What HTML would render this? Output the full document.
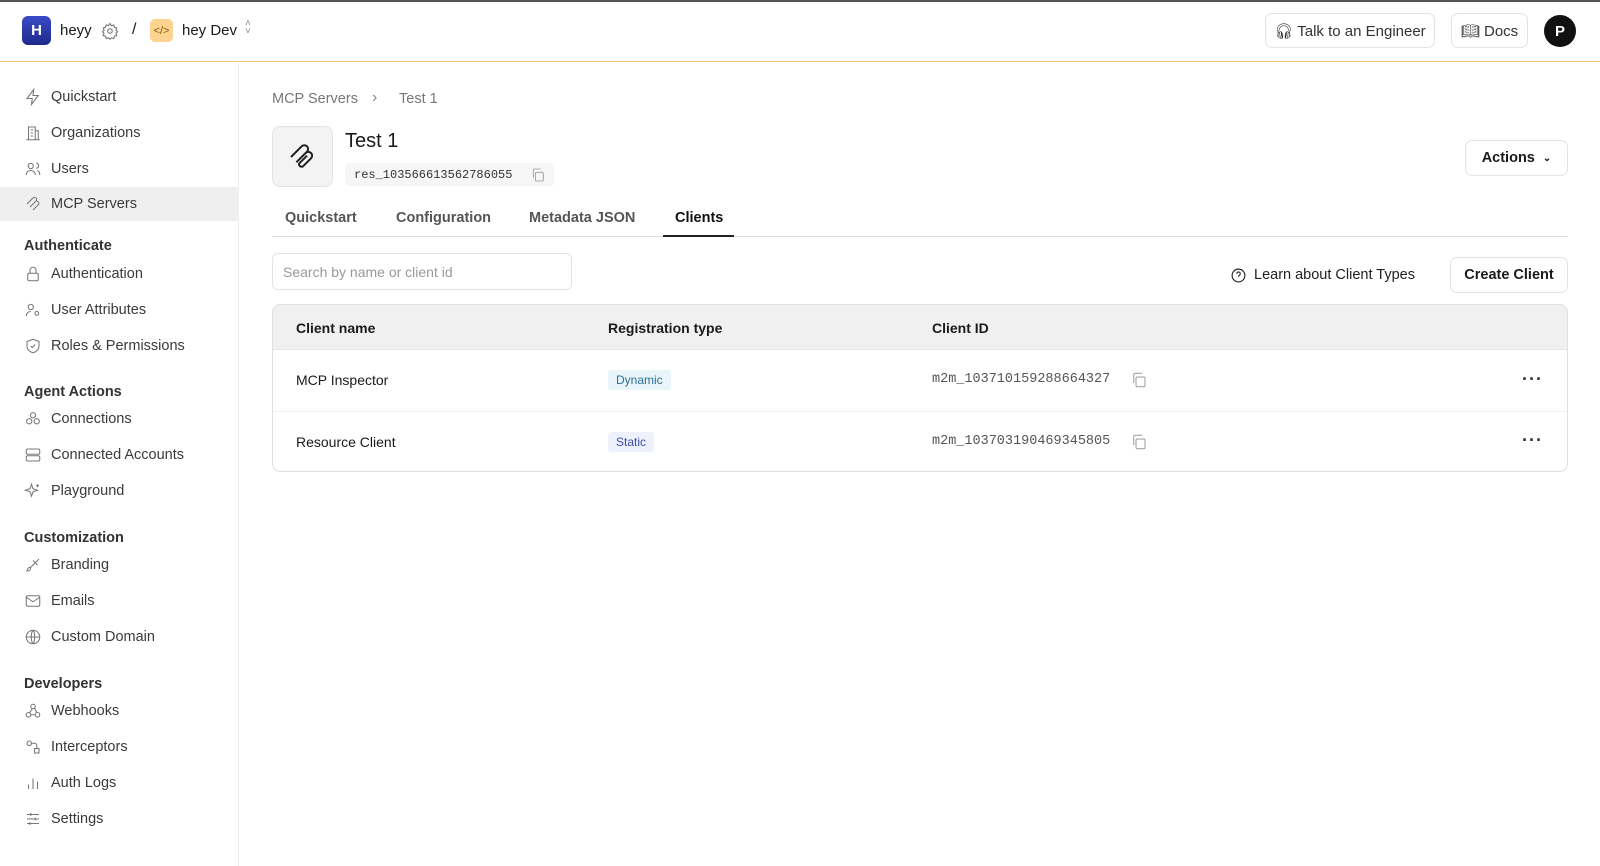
<!DOCTYPE html>
<html><head><meta charset="utf-8"><style>
*{box-sizing:border-box;margin:0;padding:0}
body{width:1600px;height:866px;overflow:hidden;background:#fff;font-family:"Liberation Sans",sans-serif;color:#1a1a1a;position:relative;font-size:14.5px}
.a{position:absolute}
.top{left:0;top:0;width:1600px;height:2px;background:#555}
.hdr{left:0;top:2px;width:1600px;height:60px;border-bottom:1px solid #f0c36d}
.side{left:0;top:63px;width:239px;height:803px;border-right:1px solid #ececec}
.it{position:absolute;left:0;width:239px;height:34px;display:flex;align-items:center;padding-left:24px;color:#3a3a3a}
.it svg{width:18px;height:18px;margin-right:9px;stroke:#777;fill:none;stroke-width:1.4}
.sec{position:absolute;left:24px;font-weight:bold;color:#333;font-size:14.5px}
.btn{border:1px solid #e3e3e3;border-radius:7px;display:flex;align-items:center;justify-content:center;background:#fff}
.tab{top:210px;font-size:14.5px;color:#555;font-weight:bold}
.mono{font-family:"Liberation Mono",monospace}
.copy{width:18px;height:18px;fill:none;stroke:#999;stroke-width:1.3}
.dots{font-size:18px;font-weight:bold;color:#333;letter-spacing:1px}
</style></head><body>
<div class="a top"></div>
<div class="a hdr"></div>
<div class="a" style="left:22px;top:16px;width:29px;height:29px;border-radius:6px;background:linear-gradient(#3b4bc8,#1e2a8a);color:#fff;font-weight:bold;display:flex;align-items:center;justify-content:center;font-size:15px">H</div>
<div class="a" style="left:60px;top:22px;font-size:15px">heyy</div>
<svg class="a" style="left:101px;top:22px" width="18" height="18" viewBox="0 0 24 24" fill="none" stroke="#777" stroke-width="1.5"><circle cx="12" cy="12" r="3"/><path d="M12 2l2 3 3-1 1 3 3 1-1 3 2 2-2 2 1 3-3 1-1 3-3-1-2 2-2-2-3 1-1-3-3-1 1-3-2-2 2-2-1-3 3-1 1-3 3 1z"/></svg>
<div class="a" style="left:132px;top:21px;font-size:16px">/</div>
<div class="a" style="left:150px;top:19px;width:23px;height:23px;border-radius:5px;background:#fdd38f;color:#8a5a10;font-size:11px;display:flex;align-items:center;justify-content:center">&lt;/&gt;</div>
<div class="a" style="left:182px;top:22px;font-size:15px">hey Dev</div>
<div class="a" style="left:245px;top:20px;font-size:10px;color:#888;line-height:8px">˄<br>˅</div>
<div class="a btn" style="left:1265px;top:13px;width:170px;height:35px;font-size:15px;color:#333">🎧&#xFE0E; Talk to an Engineer</div>
<div class="a btn" style="left:1451px;top:13px;width:77px;height:35px;font-size:15px;color:#333">&#128214;&#xFE0E; Docs</div>
<div class="a" style="left:1544px;top:15px;width:32px;height:32px;border-radius:50%;background:#111;color:#fff;font-weight:bold;display:flex;align-items:center;justify-content:center;font-size:15px">P</div>

<div class="a side">
<div class="it" style="top:17px"><svg viewBox="0 0 24 24"><path d="M13 2L4 14h7l-1 8 9-12h-7z"/></svg>Quickstart</div>
<div class="it" style="top:53px"><svg viewBox="0 0 24 24"><path d="M6 21V4h9v17M15 9h4v12M3 21h18M9 8h3M9 12h3M9 16h3"/></svg>Organizations</div>
<div class="it" style="top:89px"><svg viewBox="0 0 24 24"><circle cx="9" cy="8" r="3.5"/><path d="M3 20c0-4 3-6 6-6s6 2 6 6M16 4a3.5 3.5 0 010 7M18 14c2 1 3 3 3 6"/></svg>Users</div>
<div class="it" style="top:124px;background:#efefef;height:34px"><svg viewBox="0 0 24 24"><path d="M4 12l8-8a2.5 2.5 0 014 4l-8 8M8 16l7-7a2.5 2.5 0 014 4l-7 7"/></svg>MCP Servers</div>
<div class="sec" style="top:175px">Authenticate</div>
<div class="it" style="top:194px"><svg viewBox="0 0 24 24"><rect x="5" y="11" width="14" height="10" rx="2"/><path d="M8 11V7a4 4 0 018 0v4"/></svg>Authentication</div>
<div class="it" style="top:230px"><svg viewBox="0 0 24 24"><circle cx="9" cy="8" r="3.5"/><path d="M3 20c0-4 3-6 6-6M17 14a2.5 2.5 0 100 5 2.5 2.5 0 000-5z"/></svg>User Attributes</div>
<div class="it" style="top:266px"><svg viewBox="0 0 24 24"><path d="M12 3l8 3v6c0 5-4 8-8 9-4-1-8-4-8-9V6z M9 12l2 2 4-4"/></svg>Roles &amp; Permissions</div>
<div class="sec" style="top:321px">Agent Actions</div>
<div class="it" style="top:339px"><svg viewBox="0 0 24 24"><circle cx="12" cy="7" r="3.5"/><circle cx="7" cy="15" r="3.5"/><circle cx="17" cy="15" r="3.5"/></svg>Connections</div>
<div class="it" style="top:375px"><svg viewBox="0 0 24 24"><rect x="3" y="4" width="18" height="7" rx="2"/><rect x="3" y="13" width="18" height="7" rx="2"/></svg>Connected Accounts</div>
<div class="it" style="top:411px"><svg viewBox="0 0 24 24"><path d="M10 3l2 6 6 2-6 2-2 6-2-6-6-2 6-2zM18 3v4M16 5h4"/></svg>Playground</div>
<div class="sec" style="top:467px">Customization</div>
<div class="it" style="top:485px"><svg viewBox="0 0 24 24"><path d="M20 4L9 15M4 20c0-3 2-5 5-5l0 0c0 3-2 5-5 5z M12 6l6 6"/></svg>Branding</div>
<div class="it" style="top:521px"><svg viewBox="0 0 24 24"><rect x="3" y="5" width="18" height="14" rx="2"/><path d="M3 7l9 6 9-6"/></svg>Emails</div>
<div class="it" style="top:557px"><svg viewBox="0 0 24 24"><circle cx="12" cy="12" r="9"/><path d="M3 12h18M12 3c3 3 3 15 0 18M12 3c-3 3-3 15 0 18"/></svg>Custom Domain</div>
<div class="sec" style="top:613px">Developers</div>
<div class="it" style="top:631px"><svg viewBox="0 0 24 24"><circle cx="12" cy="6" r="3"/><circle cx="6" cy="17" r="3"/><circle cx="18" cy="17" r="3"/><path d="M11 9l-4 6M9 17h6M14 8l3 6"/></svg>Webhooks</div>
<div class="it" style="top:667px"><svg viewBox="0 0 24 24"><circle cx="7" cy="7" r="3"/><rect x="14" y="14" width="6" height="6"/><path d="M10 7h4a3 3 0 013 3v4"/></svg>Interceptors</div>
<div class="it" style="top:703px"><svg viewBox="0 0 24 24"><path d="M6 20v-6M12 20V6M18 20v-10"/></svg>Auth Logs</div>
<div class="it" style="top:739px"><svg viewBox="0 0 24 24"><path d="M4 6h16M4 12h16M4 18h16M9 4v4M15 10v4M8 16v4"/></svg>Settings</div>
</div>

<div class="a" style="left:272px;top:91px;color:#777;font-size:14.5px">MCP Servers</div>
<div class="a" style="left:372px;top:89px;color:#888;font-size:16px">›</div>
<div class="a" style="left:399px;top:91px;color:#777;font-size:14.5px">Test 1</div>
<div class="a" style="left:272px;top:126px;width:61px;height:61px;border:1px solid #e3e3e3;border-radius:8px;background:#f3f3f3;display:flex;align-items:center;justify-content:center">
<svg width="32" height="32" viewBox="0 0 24 24" fill="none" stroke="#222" stroke-width="1.5"><path d="M3 12l8-8a2.5 2.5 0 014 4l-8 8M7 16l7-7a2.5 2.5 0 014 4l-6 6a2 2 0 01-3-2l6-6"/></svg></div>
<div class="a" style="left:345px;top:130px;font-size:20px">Test 1</div>
<div class="a mono" style="left:345px;top:163px;width:209px;height:23px;background:#f6f6f6;border-radius:4px;font-size:12px;padding:5px 9px;color:#333">res_103566613562786055</div>
<svg class="a copy" style="left:530px;top:167px;width:16px;height:16px" viewBox="0 0 24 24"><rect x="8" y="8" width="12" height="13" rx="2"/><path d="M5 16V5a2 2 0 012-2h9"/></svg>
<div class="a btn" style="left:1465px;top:140px;width:103px;height:36px;font-weight:bold;font-size:14.5px">Actions&nbsp;&nbsp;<span style="font-size:10px">⌄</span></div>

<div class="a tab" style="left:285px">Quickstart</div>
<div class="a tab" style="left:396px">Configuration</div>
<div class="a tab" style="left:529px">Metadata JSON</div>
<div class="a tab" style="left:675px;color:#111">Clients</div>
<div class="a" style="left:272px;top:236px;width:1296px;height:1px;background:#ddd"></div>
<div class="a" style="left:663px;top:235px;width:71px;height:2px;background:#222"></div>

<div class="a" style="left:272px;top:253px;width:300px;height:37px;border:1px solid #e3e3e3;border-radius:6px;padding:10px 10px;color:#999;font-size:14px">Search by name or client id</div>
<svg class="a" style="left:1230px;top:267px" width="17" height="17" viewBox="0 0 24 24" fill="none" stroke="#222" stroke-width="1.6"><circle cx="12" cy="12" r="9"/><path d="M9.5 9.5a2.5 2.5 0 114 2c-1 .6-1.5 1.2-1.5 2.3M12 17h.01"/></svg>
<div class="a" style="left:1254px;top:267px;font-size:14.5px;color:#222">Learn about Client Types</div>
<div class="a btn" style="left:1450px;top:257px;width:118px;height:36px;font-weight:bold;font-size:14.5px">Create Client</div>

<div class="a" style="left:272px;top:304px;width:1296px;height:168px;border:1px solid #e0e0e0;border-radius:8px;overflow:hidden">
<div style="height:45px;background:#f0f0f0;border-bottom:1px solid #e8e8e8"></div>
<div style="position:absolute;top:106px;left:0;right:0;height:1px;background:#ececec"></div>
</div>
<div class="a" style="left:296px;top:320px;font-weight:bold;font-size:14px">Client name</div>
<div class="a" style="left:608px;top:320px;font-weight:bold;font-size:14px">Registration type</div>
<div class="a" style="left:932px;top:320px;font-weight:bold;font-size:14px">Client ID</div>
<div class="a" style="left:296px;top:372px;font-size:14px">MCP Inspector</div>
<div class="a" style="left:608px;top:370px;background:#e9f5fb;color:#2a6f96;font-size:12px;padding:3px 8px;border-radius:3px">Dynamic</div>
<div class="a mono" style="left:932px;top:372px;font-size:13.5px;color:#555">m2m_103710159288664327</div>
<svg class="a copy" style="left:1130px;top:371px" viewBox="0 0 24 24"><rect x="8" y="8" width="12" height="13" rx="2"/><path d="M5 16V5a2 2 0 012-2h9"/></svg>
<div class="a dots" style="left:1522px;top:369px">···</div>
<div class="a" style="left:296px;top:434px;font-size:14px">Resource Client</div>
<div class="a" style="left:608px;top:432px;background:#eef0fc;color:#3c4fb0;font-size:12px;padding:3px 8px;border-radius:3px">Static</div>
<div class="a mono" style="left:932px;top:434px;font-size:13.5px;color:#555">m2m_103703190469345805</div>
<svg class="a copy" style="left:1130px;top:433px" viewBox="0 0 24 24"><rect x="8" y="8" width="12" height="13" rx="2"/><path d="M5 16V5a2 2 0 012-2h9"/></svg>
<div class="a dots" style="left:1522px;top:430px">···</div>
</body></html>
